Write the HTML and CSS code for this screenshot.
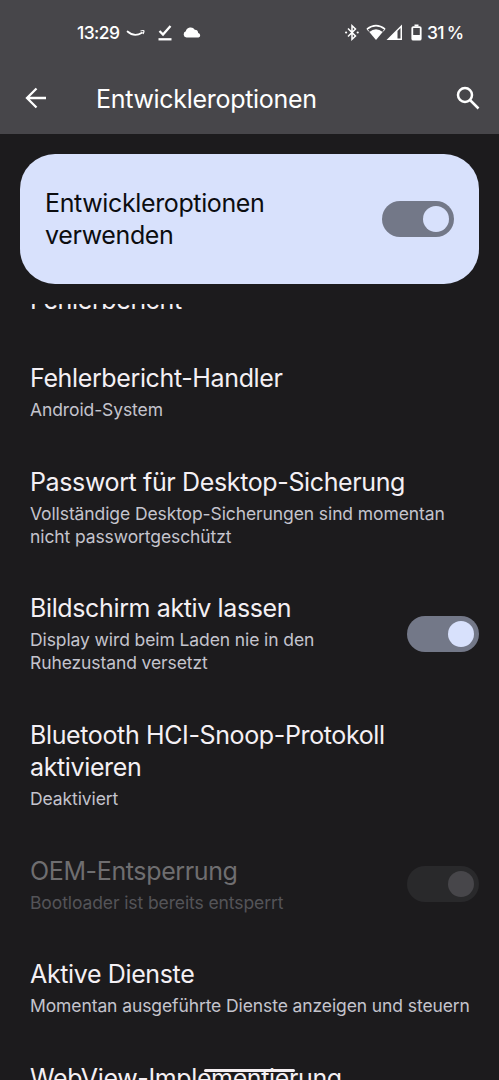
FILE: index.html
```html
<!DOCTYPE html>
<html lang="de">
<head>
    <meta charset="UTF-8">
    <meta name="viewport" content="width=device-width, initial-scale=1.0">
    <title>Entwickleroptionen</title>
    <link rel="stylesheet" href="styles.css">
</head>
<body>
    <header>
        <div class="status-bar">
            <div class="status-left">
                <span class="clock">13:29</span>
                <svg class="icon-smile" width="20" height="12" viewBox="0 0 20 12" fill="none" stroke="#fff">
                    <path d="M1.5 4.500C6 8.500 11.500 8.500 16 5.800" stroke-width="1.700" stroke-linecap="round"/>
                    <path d="M14.500 4C16.500 3.300 18 3.300 18 4C18 4.800 17.500 6 17 7" stroke-width="1.200"/>
                </svg>
                <svg class="icon-check" width="14" height="16" viewBox="0 0 14 16" fill="none" stroke="#fff" stroke-width="2.300">
                    <path d="M1.500 6L5 9.500L12.500 1"/>
                    <path d="M0.500 14.300H13.500"/>
                </svg>
                <svg class="icon-cloud" width="18" height="11" viewBox="0 0 18 11" fill="#fff">
                    <path d="M3.500 10.500A3.200 3.200 0 0 1 2.800 4.300A5 5 0 0 1 11.800 2.700A3.500 3.500 0 0 1 15.200 6A2.300 2.300 0 0 1 15.500 10.500Z"/>
                </svg>
            </div>
            <div class="status-right">
                <svg width="14" height="17" viewBox="0 0 14 17" fill="none" stroke="#fff" stroke-width="1.500">
                    <path d="M3 4.500L10.500 12L7 15.300V1.700L10.500 5L3 12.500"/>
                    <circle cx="1.100" cy="8.500" r="1.100" fill="#fff" stroke="none"/>
                    <circle cx="12.700" cy="8.500" r="1.100" fill="#fff" stroke="none"/>
                </svg>
                <svg class="icon-wifi" width="20" height="17" viewBox="0 0 20 17">
                    <path d="M10 16L3.300 7.900Q10 2.800 16.700 7.900Z" fill="#fff"/>
                    <path d="M1 5.100Q10 -2 19 5.100" fill="none" stroke="#fff" stroke-width="1.700"/>
                    <path d="M1 5.100L3 7.500M19 5.100L17 7.500" stroke="#fff" stroke-width="1"/>
                </svg>
                <svg class="icon-signal" width="17" height="17" viewBox="0 0 17 17">
                    <path d="M0.500 16L16 0.500V16Z" fill="#fff"/>
                    <path d="M11.500 7L14.500 4V14.500H11.500Z" fill="#47464a"/>
                </svg>
                <svg class="icon-battery" width="11" height="17" viewBox="0 0 11 17">
                    <path d="M3.500 0.500H7.500V2.500H3.500Z" fill="#fff"/>
                    <rect x="1.300" y="3.100" width="8.400" height="12.600" rx="1" fill="none" stroke="#fff" stroke-width="1.800"/>
                    <path d="M1 11H10V16H1Z" fill="#fff"/>
                </svg>
                <span class="battery-text">31 %</span>
            </div>
        </div>
        <div class="app-bar">
            <svg class="icon-back" width="22" height="22" viewBox="0 0 22 22" fill="none" stroke="#fff" stroke-width="2.300">
                <path d="M21 11H2.500M11.500 1.500L2 11L11.500 20.500"/>
            </svg>
            <h1>Entwickleroptionen</h1>
            <svg class="icon-search" width="24" height="24" viewBox="0 0 24 24" fill="none" stroke="#fff" stroke-width="2.500">
                <circle cx="9" cy="9" r="7"/>
                <path d="M14 14L22.500 22.500"/>
            </svg>
        </div>
    </header>

    <section class="main-switch">
        <p class="title">Entwickleroptionen<br>verwenden</p>
        <div class="switch"><div class="thumb"></div></div>
    </section>

    <main class="list">
        <div class="row row-first">
            <p class="title">Fehlerbericht</p>
        </div>
        <div class="row">
            <div>
                <p class="title">Fehlerbericht-Handler</p>
                <p class="summary">Android-System</p>
            </div>
        </div>
        <div class="row">
            <div>
                <p class="title">Passwort für Desktop-Sicherung</p>
                <p class="summary">Vollständige Desktop-Sicherungen sind momentan<br>nicht passwortgeschützt</p>
            </div>
        </div>
        <div class="row">
            <div>
                <p class="title">Bildschirm aktiv lassen</p>
                <p class="summary">Display wird beim Laden nie in den<br>Ruhezustand versetzt</p>
            </div>
            <div class="switch"><div class="thumb"></div></div>
        </div>
        <div class="row">
            <div>
                <p class="title">Bluetooth HCI-Snoop-Protokoll<br>aktivieren</p>
                <p class="summary">Deaktiviert</p>
            </div>
        </div>
        <div class="row disabled">
            <div>
                <p class="title">OEM-Entsperrung</p>
                <p class="summary">Bootloader ist bereits entsperrt</p>
            </div>
            <div class="switch"><div class="thumb"></div></div>
        </div>
        <div class="row">
            <div>
                <p class="title">Aktive Dienste</p>
                <p class="summary">Momentan ausgeführte Dienste anzeigen und steuern</p>
            </div>
        </div>
        <div class="row">
            <p class="title">WebView-Implementierung</p>
        </div>
    </main>

    <div class="nav-handle"></div>
</body>
</html>
```

FILE: styles.css
```css
* {
    margin: 0;
    padding: 0;
    box-sizing: border-box;
}

body {
    background-color: #1c1b1d;
    color: #f4f0f4;
    font-family: Inter, 'Liberation Sans', sans-serif;
    height: 1080px;
    overflow: hidden;
    display: flex;
    flex-direction: column;
}

header {
    background-color: #47464a;
    height: 134px;
    flex-shrink: 0;
    color: #fff;
}

svg {
    display: block;
    flex-shrink: 0;
}

.status-bar {
    height: 65px;
    padding: 0 36px 0 77px;
    display: flex;
    justify-content: space-between;
    align-items: center;
}

.status-left,
.status-right {
    display: flex;
    align-items: center;
}

.clock,
.battery-text {
    font-size: 17.5px;
    font-weight: 500;
    white-space: nowrap;
}

.clock {
    width: 42px;
    letter-spacing: -0.6px;
}

.battery-text {
    width: 36px;
    letter-spacing: -0.7px;
    word-spacing: -1px;
}

.icon-smile {
    margin-left: 7px;
}

.icon-check {
    margin-left: 12px;
}

.icon-cloud {
    margin-left: 11px;
}

.icon-wifi {
    margin-left: 7px;
}

.icon-battery {
    margin: 0 5px 0 8px;
}

.app-bar {
    height: 67px;
    padding: 0 19px 0 25px;
    display: flex;
    align-items: center;
}

.app-bar h1 {
    flex: 1;
    margin-left: 49px;
    font-size: 25px;
    font-weight: 400;
    letter-spacing: -0.3px;
}

.icon-back,
.icon-search {
    margin-bottom: 2px;
}

.main-switch {
    flex-shrink: 0;
    height: 130px;
    margin: 20px;
    padding: 0 25px;
    border-radius: 35px;
    background-color: #d8e1fc;
    color: #0c0d10;
    display: flex;
    justify-content: space-between;
    align-items: center;
}

.title {
    font-size: 25px;
    font-weight: 400;
    line-height: 32px;
    letter-spacing: -0.37px;
    white-space: nowrap;
}

.summary {
    margin-top: 5px;
    font-size: 17.5px;
    line-height: 22.75px;
    letter-spacing: -0.1px;
    color: #c4c4cd;
    white-space: nowrap;
}

.list {
    flex: 1;
    overflow: hidden;
}

.row {
    display: flex;
    justify-content: space-between;
    align-items: center;
    padding: 24px 20px 20px 30px;
}

.row-first {
    margin-top: -20px;
    padding: 0 20px 22px 30px;
}

.switch {
    width: 72px;
    height: 36px;
    padding: 5px;
    border-radius: 18px;
    background-color: #737888;
    display: flex;
    justify-content: flex-end;
    flex-shrink: 0;
}

.thumb {
    width: 26px;
    height: 26px;
    border-radius: 50%;
    background-color: #d8e1fc;
}

.disabled .title {
    color: #6f6e70;
}

.disabled .summary {
    color: #545458;
}

.disabled .switch {
    background-color: #29292b;
}

.disabled .thumb {
    background-color: #47464a;
}

.nav-handle {
    position: absolute;
    left: 204px;
    top: 1069px;
    width: 91px;
    height: 3px;
    border-radius: 2px;
    background-color: #f5eff2;
}
```
